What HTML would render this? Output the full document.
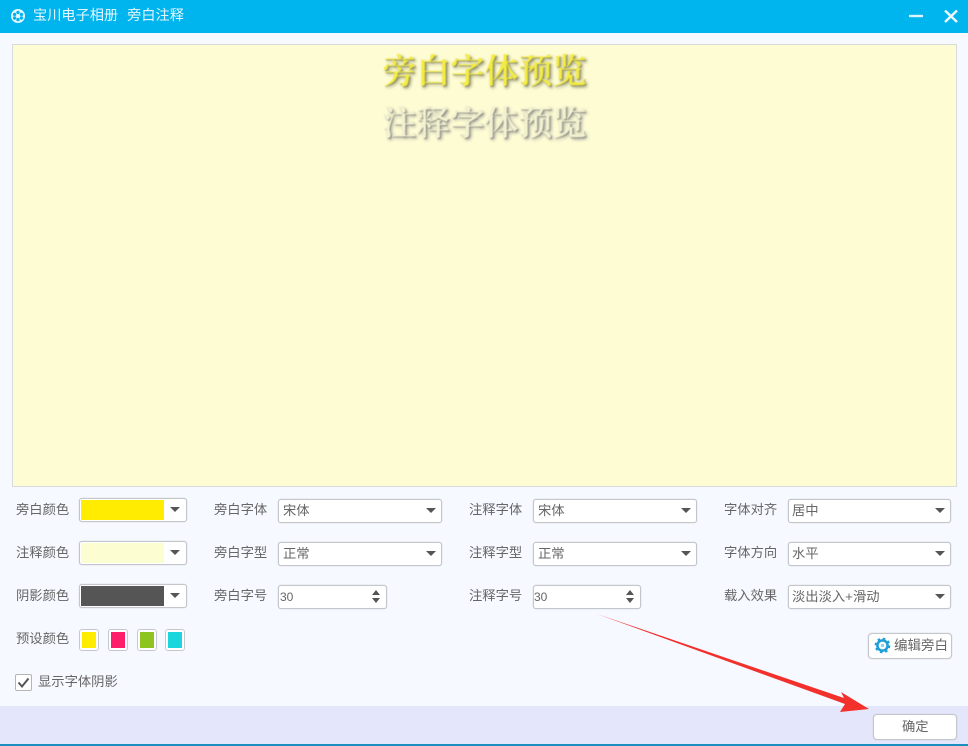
<!DOCTYPE html>
<html><head><meta charset="utf-8">
<style>
html,body{margin:0;padding:0}
body{width:968px;height:746px;position:relative;overflow:hidden;background:#f6f9ff;font-family:"Liberation Sans","Noto Sans CJK SC",sans-serif;color:#555}
.a{position:absolute;box-sizing:border-box}
.t{position:absolute;font-size:13.3px;line-height:18px;white-space:nowrap;color:#666;filter:blur(.3px)}
.box{position:absolute;box-sizing:border-box;background:#fff;border:1px solid #c3c7cb;border-radius:3px;box-shadow:0 0 1px #bbb;height:24px}
.box span{position:absolute;left:4px;top:2px;font-size:13.3px;line-height:18px;color:#666;white-space:nowrap;filter:blur(.3px)}
.arr{position:absolute;width:0;height:0;border-left:5px solid transparent;border-right:5px solid transparent;border-top:5px solid #555;top:8px;filter:blur(.3px)}
.fill{position:absolute;left:1px;top:1px;bottom:1px;width:83px}
.sw{position:absolute;box-sizing:border-box;width:20px;height:22px;top:629px;background:#fff;border:1px solid #c6c8d0;border-radius:3px;padding:2px}
.sw i{display:block;width:100%;height:100%}
.prev{position:absolute;text-align:center;font-family:"Liberation Serif","Noto Serif CJK SC",serif;font-size:34px;line-height:40px;font-weight:600;filter:blur(.6px)}
</style></head><body>
<div class="a" style="left:0;top:0;width:968px;height:33px;background:#00b4ee"></div>
<svg class="a" style="left:10px;top:8px" width="16" height="16" viewBox="0 0 16 16"><circle cx="8" cy="8" r="7" fill="#e6f7fd"/><g fill="#00b4ee"><circle cx="8" cy="4.4" r="1.7"/><circle cx="8" cy="11.6" r="1.7"/><circle cx="4.6" cy="6.4" r="1.7"/><circle cx="11.4" cy="6.4" r="1.7"/><circle cx="4.6" cy="10" r="1.7"/><circle cx="11.4" cy="10" r="1.7"/></g></svg>
<div class="t" style="left:33px;top:7px;color:#e4f6fd;font-size:14.2px;">宝川电子相册<span style="display:inline-block;width:9px"></span>旁白注释</div>
<svg class="a" style="left:905px;top:6px" width="55" height="20" viewBox="0 0 55 20"><path d="M4 10H18" stroke="#dff5fd" stroke-width="2.4"/><path d="M40 4.5L52 16M52 4.5L40 16" stroke="#eefafe" stroke-width="2.4"/></svg>

<div class="a" style="left:12px;top:44px;width:945px;height:443px;background:#fefcd3;border:1px solid #d9dadb"></div>
<div class="prev" style="left:12px;width:945px;top:53px;color:#f4ec40;text-shadow:1px 1px 1px #8a8a60,2px 2px 3px #8e8e70">旁白字体预览</div>
<div class="prev" style="left:12px;width:945px;top:105px;color:#f3f2d0;text-shadow:1px 1px 1px #8a8a80,2px 2px 3px #999">注释字体预览</div>

<div class="t" style="left:16px;top:501px">旁白颜色</div>
<div class="box" style="left:79px;top:498px;width:108px"><div class="fill" style="background:#ffec00"></div><div class="arr" style="right:6px"></div></div>
<div class="t" style="left:16px;top:544px">注释颜色</div>
<div class="box" style="left:79px;top:541px;width:108px"><div class="fill" style="background:#fdfdd2"></div><div class="arr" style="right:6px"></div></div>
<div class="t" style="left:16px;top:587px">阴影颜色</div>
<div class="box" style="left:79px;top:584px;width:108px"><div class="fill" style="background:#555"></div><div class="arr" style="right:6px"></div></div>
<div class="t" style="left:16px;top:630px">预设颜色</div>
<div class="sw" style="left:79px"><i style="background:#ffec00"></i></div>
<div class="sw" style="left:108px"><i style="background:#fe1f6b"></i></div>
<div class="sw" style="left:137px"><i style="background:#8fc31f"></i></div>
<div class="sw" style="left:165px"><i style="background:#1cd6de"></i></div>

<div class="a" style="left:15px;top:674px;width:17px;height:17px;background:#fff;border:1px solid #b5b5b5;border-radius:2px"></div>
<svg class="a" style="left:15px;top:674px" width="17" height="17" viewBox="0 0 17 17"><path d="M3.5 8.5L7 12.5L13.5 4.5" fill="none" stroke="#555" stroke-width="2"/></svg>
<div class="t" style="left:38px;top:673px">显示字体阴影</div>

<div class="t" style="left:214px;top:501px">旁白字体</div>
<div class="box" style="left:278px;top:499px;width:164px"><span>宋体</span><div class="arr" style="right:5px"></div></div>
<div class="t" style="left:214px;top:544px">旁白字型</div>
<div class="box" style="left:278px;top:542px;width:164px"><span>正常</span><div class="arr" style="right:5px"></div></div>
<div class="t" style="left:214px;top:587px">旁白字号</div>
<div class="box" style="left:278px;top:585px;width:109px"><span style="left:1px;font-size:12px">30</span><div class="a" style="right:6px;top:4px;border-left:4px solid transparent;border-right:4px solid transparent;border-bottom:5px solid #555"></div><div class="a" style="right:6px;top:12px;border-left:4px solid transparent;border-right:4px solid transparent;border-top:5px solid #555"></div></div>

<div class="t" style="left:469px;top:501px">注释字体</div>
<div class="box" style="left:533px;top:499px;width:164px"><span>宋体</span><div class="arr" style="right:5px"></div></div>
<div class="t" style="left:469px;top:544px">注释字型</div>
<div class="box" style="left:533px;top:542px;width:164px"><span>正常</span><div class="arr" style="right:5px"></div></div>
<div class="t" style="left:469px;top:587px">注释字号</div>
<div class="box" style="left:533px;top:585px;width:108px"><span style="left:0;font-size:12px">30</span><div class="a" style="right:6px;top:4px;border-left:4px solid transparent;border-right:4px solid transparent;border-bottom:5px solid #555"></div><div class="a" style="right:6px;top:12px;border-left:4px solid transparent;border-right:4px solid transparent;border-top:5px solid #555"></div></div>

<div class="t" style="left:724px;top:501px">字体对齐</div>
<div class="box" style="left:788px;top:499px;width:163px"><span style="left:3px">居中</span><div class="arr" style="right:5px"></div></div>
<div class="t" style="left:724px;top:544px">字体方向</div>
<div class="box" style="left:788px;top:542px;width:163px"><span style="left:3px">水平</span><div class="arr" style="right:5px"></div></div>
<div class="t" style="left:724px;top:587px">载入效果</div>
<div class="box" style="left:788px;top:585px;width:163px"><span style="left:3px">淡出淡入+滑动</span><div class="arr" style="right:5px"></div></div>

<div class="box" style="left:868px;top:633px;width:84px;height:26px;border-radius:4px"><span style="left:25px;top:3px;font-size:13.5px">编辑旁白</span></div>
<svg class="a" style="left:874px;top:637px" width="17" height="17" viewBox="0 0 20 20"><circle cx="10" cy="10" r="6" fill="none" stroke="#1d9fd8" stroke-width="3"/><circle cx="10" cy="10" r="8" fill="none" stroke="#1d9fd8" stroke-width="2.5" stroke-dasharray="3 3.3"/><circle cx="10" cy="10" r="2" fill="#8fd0ee"/></svg>

<div class="a" style="left:0;top:706px;width:968px;height:38px;background:#e4e6fb"></div>
<div class="a" style="left:0;top:744px;width:968px;height:2px;background:#1c8fc0"></div>
<div class="box" style="left:873px;top:714px;width:84px;height:26px;border-radius:4px"><span style="left:28px;top:3px">确定</span></div>

<svg class="a" style="left:590px;top:605px" width="290" height="115" viewBox="0 0 290 115"><path d="M7 9L254 93L251 87L279 104L250 107L255 99Z" fill="#f2302c"/></svg>
</body></html>
